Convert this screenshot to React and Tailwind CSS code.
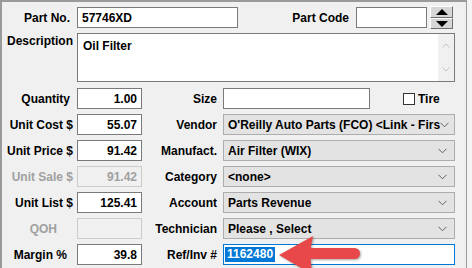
import React from 'react';

const Chevron = () => (
  <svg width="9" height="6" viewBox="0 0 9 6" className="shrink-0">
    <path d="M0.5 0.8 L4.5 4.8 L8.5 0.8" fill="none" stroke="#606060" strokeWidth="1" />
  </svg>
);

const TextBox = ({ value = '', width, right, disabled }) => (
  <div
    className={`h-[21px] flex items-center px-[4px] border whitespace-nowrap overflow-hidden ${
      right ? 'justify-end' : ''
    } ${disabled ? 'bg-[#f0f0f0] border-[#cccccc] text-[#a0a0a0]' : 'bg-white border-[#7a7a7a] text-black'}`}
    style={{ width }}
  >
    {value}
  </div>
);

const Combo = ({ value }) => (
  <div className="ml-[6px] w-[232px] h-[21px] flex items-center justify-between pl-[4px] pr-[7px] bg-[#e3e3e3] border border-[#adadad] whitespace-nowrap overflow-hidden">
    <span>{value}</span>
    <Chevron />
  </div>
);

const LeftLabel = ({ children, pr = 0, muted }) => (
  <div
    className={`w-[71px] text-right whitespace-nowrap ${muted ? 'text-[#a0a0a0]' : 'text-black'}`}
    style={{ paddingRight: pr }}
  >
    {children}
  </div>
);

const RightLabel = ({ children }) => (
  <div className="w-[75px] text-right whitespace-nowrap">{children}</div>
);

const App = () => {
  const rows = [
    { label: 'Quantity', pr: 3, value: '1.00', right: 'size' },
    { label: 'Unit Cost $', pr: 0, value: '55.07', combo: 'Vendor', text: "O'Reilly Auto Parts (FCO) <Link - Firs" },
    { label: 'Unit Price $', pr: 0, value: '91.42', combo: 'Manufact.', text: 'Air Filter (WIX)' },
    { label: 'Unit Sale $', pr: 0, value: '91.42', muted: true, combo: 'Category', text: '<none>' },
    { label: 'Unit List $', pr: 0, value: '125.41', combo: 'Account', text: 'Parts Revenue' },
    { label: 'QOH', pr: 16, value: '', muted: true, combo: 'Technician', text: 'Please , Select' },
    { label: 'Margin %', pr: 6, value: '39.8', right: 'ref' },
  ];

  return (
    <div className="relative w-[472px] h-[268px] overflow-hidden bg-[#f4f4f4] font-['Liberation_Sans',Arial,sans-serif] text-[12px] leading-[14px] font-bold text-black">
      <div className="w-[467px] h-[268px] bg-[#f0f0f0] border-t-2 border-l-2 border-r border-[#9a9a9a] pt-[4px]">
        {/* Part No. / Part Code */}
        <div className="flex items-center h-[23px]">
          <LeftLabel pr={3}>Part No.</LeftLabel>
          <div className="ml-[4px]">
            <TextBox value="57746XD" width={161} />
          </div>
          <div className="w-[111px] text-right">Part Code</div>
          <div className="ml-[7px]">
            <TextBox value="" width={71} />
          </div>
          <div className="ml-[3px] w-[23px] h-[23px] flex flex-col">
            <div className="h-[12px] flex items-center justify-center bg-[#d6d6d6] border-t border-l border-white border-b border-r border-b-[#6f6f6f] border-r-[#6f6f6f]">
              <svg width="12" height="6" viewBox="0 0 12 6">
                <path d="M0 6 L6 0 L12 6 Z" fill="#000" />
              </svg>
            </div>
            <div className="h-[11px] flex items-center justify-center bg-[#d6d6d6] border-t border-l border-white border-b border-r border-b-[#6f6f6f] border-r-[#6f6f6f]">
              <svg width="12" height="6" viewBox="0 0 12 6">
                <path d="M0 0 L12 0 L6 6 Z" fill="#000" />
              </svg>
            </div>
          </div>
        </div>

        {/* Description */}
        <div className="flex mt-[4px]">
          <div className="w-[71px] pl-[5px] pt-[1px] whitespace-nowrap">Description</div>
          <div className="ml-[4px] w-[378px] h-[49px] bg-white border border-[#7a7a7a] flex">
            <div className="flex-1 pl-[5px] pt-[5px]">Oil Filter</div>
            <div className="w-[16px] h-full bg-[#f0f0f0] flex flex-col items-center justify-between py-[9px]">
              <svg width="8" height="5" viewBox="0 0 8 5">
                <path d="M0.5 4.5 L4 1 L7.5 4.5" fill="none" stroke="#c2c2c2" strokeWidth="1" />
              </svg>
              <svg width="8" height="5" viewBox="0 0 8 5">
                <path d="M0.5 0.5 L4 4 L7.5 0.5" fill="none" stroke="#c2c2c2" strokeWidth="1" />
              </svg>
            </div>
          </div>
        </div>

        {/* Field rows */}
        <div className="flex flex-col gap-[5px] mt-[6px]">
          {rows.map((r) => (
            <div key={r.label} className="flex items-center h-[21px]">
              <LeftLabel pr={r.pr} muted={r.muted}>
                {r.label}
              </LeftLabel>
              <div className="ml-[4px]">
                <TextBox value={r.value} width={65} right disabled={r.muted} />
              </div>
              {r.right === 'size' && (
                <>
                  <RightLabel>Size</RightLabel>
                  <div className="ml-[6px]">
                    <TextBox value="" width={147} />
                  </div>
                  <div className="ml-[33px] w-[12px] h-[12px] bg-white border border-[#333333]" />
                  <div className="ml-[3px]">Tire</div>
                </>
              )}
              {r.combo && (
                <>
                  <RightLabel>{r.combo}</RightLabel>
                  <Combo value={r.text} />
                </>
              )}
              {r.right === 'ref' && (
                <>
                  <RightLabel>Ref/Inv #</RightLabel>
                  <div className="ml-[6px] w-[232px] h-[21px] flex items-center pl-[1px] bg-white border border-[#0078d7]">
                    <span className="bg-[#0078d7] text-white px-[2px] leading-[15px]">1162480</span>
                  </div>
                </>
              )}
            </div>
          ))}
        </div>
      </div>

      {/* red callout arrow */}
      <svg
        className="absolute left-0 top-0 pointer-events-none"
        width="472"
        height="268"
        viewBox="0 0 472 268"
        style={{ filter: 'drop-shadow(1px 1px 1px rgba(0,0,0,0.35))' }}
      >
        <rect x="300" y="248" width="60" height="11" rx="5.5" fill="#e84849" />
        <path d="M279 255 L313 236 Q308 255 313 275 Z" fill="#e84849" />
      </svg>
    </div>
  );
};

export default App;
